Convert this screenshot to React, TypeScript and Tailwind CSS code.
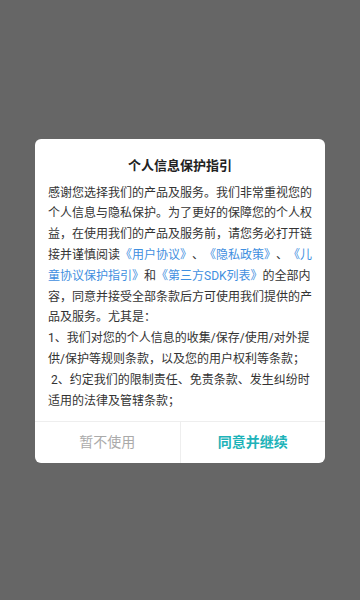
import React from "react";

function Link({ children }: { children: React.ReactNode }) {
  return <span className="text-[#3f8fe0]">{children}</span>;
}

export default function App() {
  return (
    <div
      className="flex h-[600px] w-full items-center justify-center bg-[#666666] [text-spacing-trim:space-all]"
      style={{ fontFamily: '"Roboto", "Noto Sans CJK SC", sans-serif' }}
    >
      <div className="mt-[2px] w-[290px] overflow-hidden rounded-[6px] bg-white">
        <h1 className="pt-[17px] text-center text-[13px] leading-[20px] font-bold text-[#222222]">
          个人信息保护指引
        </h1>

        <div className="mt-[7px] px-[13px] pb-[10px] text-[12px] leading-[20.8px] whitespace-nowrap text-[#333333]">
          <div>感谢您选择我们的产品及服务。我们非常重视您的</div>
          <div>个人信息与隐私保护。为了更好的保障您的个人权</div>
          <div>益，在使用我们的产品及服务前，请您务必打开链</div>
          <div>
            接并谨慎阅读<Link>《用户协议》</Link>、<Link>《隐私政策》</Link>、<Link>《儿</Link>
          </div>
          <div>
            <Link>童协议保护指引》</Link>和<Link>《第三方SDK列表》</Link>的全部内
          </div>
          <div>容，同意并接受全部条款后方可使用我们提供的产</div>
          <div>品及服务。尤其是：</div>
          <div>1、我们对您的个人信息的收集/保存/使用/对外提</div>
          <div>供/保护等规则条款，以及您的用户权利等条款；</div>
          <div className="whitespace-pre"> 2、约定我们的限制责任、免责条款、发生纠纷时</div>
          <div>适用的法律及管辖条款；</div>
        </div>

        {/* Buttons */}
        <div className="flex h-[42px] border-t border-[#eeeeee]">
          <button className="flex flex-1 items-center justify-center border-r border-[#eeeeee] text-[14px] text-[#aaaaaa]">
            暂不使用
          </button>
          <button className="flex flex-1 items-center justify-center text-[14px] font-bold text-[#1db3b9]">
            同意并继续
          </button>
        </div>
      </div>
    </div>
  );
}
